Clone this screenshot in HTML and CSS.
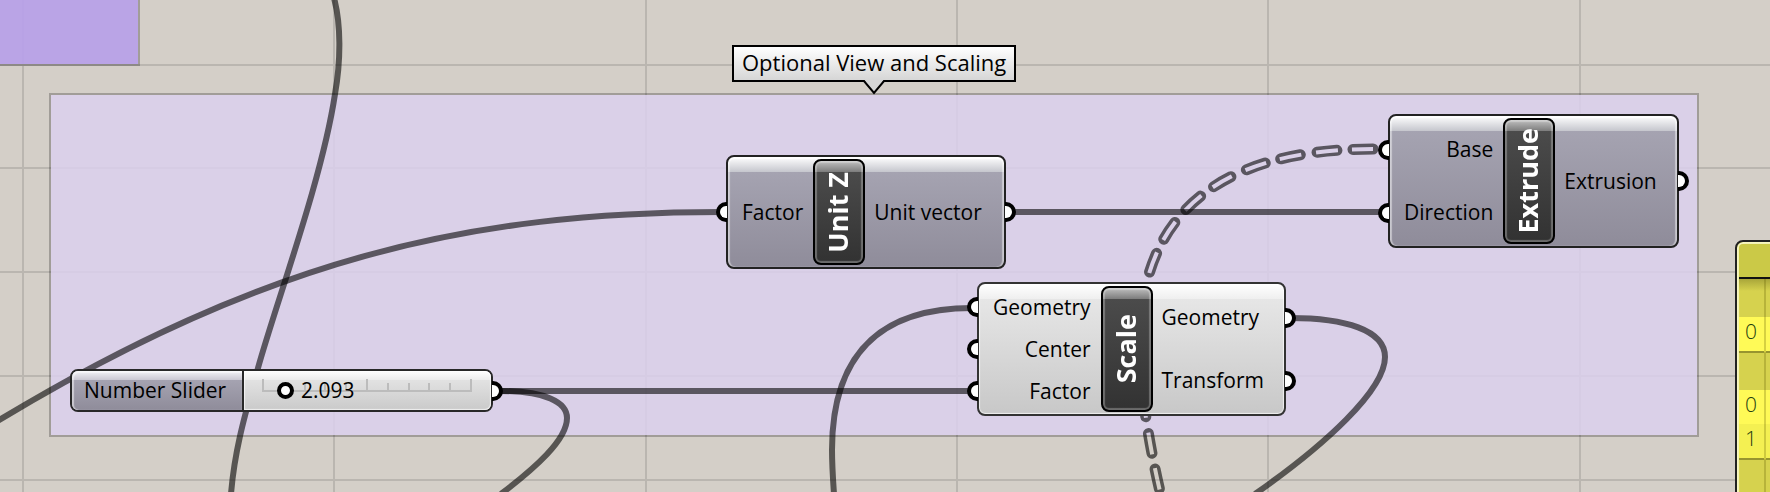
FILE: index.html
```html
<!DOCTYPE html>
<html lang="en">
<head>
<meta charset="utf-8">
<title>Optional View and Scaling</title>
<link rel="stylesheet" href="styles.css">
</head>
<body>
<main class="canvas">
  <svg class="grid" aria-hidden="true">
    <path d="M23 0V2000M334 0V2000M646 0V2000M957 0V2000M1268 0V2000M1580 0V2000M0 65H4000M0 168H4000M0 272H4000M0 376H4000M0 480H4000"/>
  </svg>
  <div class="group group-strong"></div>
  <section class="group group-soft" aria-labelledby="group-title"></section>

  <svg class="wires" aria-hidden="true">
    <defs>
      <mask id="dash-mask" maskUnits="userSpaceOnUse" x="1100" y="100" width="320" height="420">
        <path class="dash-outer" d="M1373 149C1240 149 1132 198 1140 360C1142 400 1150 450 1162 500"/>
        <path class="dash-inner" d="M1373 149C1240 149 1132 198 1140 360C1142 400 1150 450 1162 500"/>
      </mask>
    </defs>
    <path d="M334 -2C341 24 341 60 335 94C322 180 277 300 258 368C248 405 235 445 231 494"/>
    <path d="M722 212C470 212 265 259 -4 422"/>
    <path d="M500 391H972"/>
    <path d="M500 391C545 391 567 402 567 418C567 440 535 468 501 494"/>
    <path d="M972 308C890 308 832 345 832 450C832 465 833 480 834 494"/>
    <path d="M1010 212H1384"/>
    <path d="M1290 318C1345 318 1385 330 1385 357C1385 390 1325 445 1255 494"/>
    <rect class="dash-fill" x="1100" y="100" width="320" height="420" mask="url(#dash-mask)"/>
  </svg>

  <h1 class="callout" id="group-title">Optional View and Scaling
    <svg class="callout-tail" viewBox="0 0 24 15" aria-hidden="true"><path class="tail-fill" d="M2 0L12 12L22 0Z"/><path class="tail-line" d="M0 1H2L12 13L22 1H24"/></svg>
  </h1>

  <article class="node node-gray unit-z">
    <ul class="ports inputs"><li>Factor</li></ul>
    <h2 class="pill"><span>Unit Z</span></h2>
    <ul class="ports outputs"><li>Unit vector</li></ul>
  </article>

  <article class="node node-light scale">
    <ul class="ports inputs"><li>Geometry</li><li>Center</li><li>Factor</li></ul>
    <h2 class="pill"><span>Scale</span></h2>
    <ul class="ports outputs"><li>Geometry</li><li>Transform</li></ul>
  </article>

  <article class="node node-gray extrude">
    <ul class="ports inputs"><li>Base</li><li>Direction</li></ul>
    <h2 class="pill"><span>Extrude</span></h2>
    <ul class="ports outputs"><li>Extrusion</li></ul>
  </article>

  <div class="slider">
    <label class="slider-name" for="number">Number Slider</label>
    <div class="slider-body">
      <svg class="ticks" viewBox="0 0 210 14" aria-hidden="true"><path d="M1 0V12H209V0M105 0V12M22 4V12M43 4V12M63 4V12M84 4V12M126 4V12M147 4V12M167 4V12M188 4V12"/></svg>
      <input id="number" type="range" min="0" max="20" step="0.001" value="2.093">
      <output class="value" for="number">2.093</output>
    </div>
  </div>

  <div class="panel">
    <div class="panel-head"></div>
    <table class="panel-rows">
      <tbody>
        <tr class="path-row"><td></td><td></td></tr>
        <tr class="item-row last"><td>0</td><td></td></tr>
        <tr class="path-row"><td></td><td></td></tr>
        <tr class="item-row"><td>0</td><td></td></tr>
        <tr class="item-row alt last"><td>1</td><td></td></tr>
        <tr class="path-row"><td></td><td></td></tr>
      </tbody>
    </table>
  </div>
</main>
</body>
</html>
```
FILE: styles.css
```css
*, *::before, *::after { box-sizing: border-box; }

body {
  margin: 0;
  font-family: "Open Sans", "Noto Sans", sans-serif;
  font-size: 21px;
  font-weight: 400;
  line-height: 28px;
  color: #000;
}

h1, h2, ul { margin: 0; padding: 0; font: inherit; list-style: none; }

.canvas {
  position: relative;
  height: 100vh;
  overflow: hidden;
  background: #d4cfc8;
}

.grid, .wires {
  position: absolute;
  inset: 0;
  width: 100%;
  height: 100%;
  fill: none;
}

.grid { stroke: #bab6b0; stroke-width: 2; }
.wires { stroke: rgba(0, 0, 0, 0.59); stroke-width: 6; }
.dash-outer { stroke: #fff; stroke-width: 11; stroke-linecap: round; stroke-dasharray: 20 16 20 17; }
.dash-inner { stroke: #000; stroke-width: 4; stroke-dasharray: 22 14 22 15; stroke-dashoffset: 1; }
.dash-fill { fill: rgba(0, 0, 0, 0.59); stroke: none; }

.group { position: absolute; border: 2px solid rgba(0, 0, 0, 0.24); background-clip: padding-box; }

.group-strong {
  left: -2px;
  top: -2px;
  width: 142px;
  height: 68px;
  background-color: rgba(184, 160, 232, 0.93);
}

.group-soft {
  left: 49px;
  top: 93px;
  width: 1650px;
  height: 344px;
  background-color: rgba(219, 208, 238, 0.84);
}

.callout {
  position: absolute;
  left: 732px;
  top: 45px;
  padding: 1px 8px 4px;
  border: 2px solid #000;
  background: linear-gradient(#fff, #d6d6d6);
  font-size: 22px;
  white-space: nowrap;
}

.callout-tail {
  position: absolute;
  top: 100%;
  left: 50%;
  width: 24px;
  height: 15px;
  margin-left: -12px;
}
.tail-fill { fill: #d6d6d6; }
.tail-line { fill: none; stroke: #000; stroke-width: 2; }

.node {
  position: absolute;
  display: flex;
  padding: 2px;
  border: 2px solid #222;
  border-radius: 8px;
}

.node-gray {
  background: linear-gradient(#fff, #c5c6cd 15px, #a5a3b1 15px, #8f8c9a);
  box-shadow: inset 0 2px 1px #fff, inset 2px 0 1px rgba(255, 255, 255, 0.45), inset -2px 0 1px rgba(255, 255, 255, 0.45);
}
.node-light {
  background: linear-gradient(#fff, #efefef 15px, #e6e6e6 15px, #c8c8c8);
  border-color: #333;
  box-shadow: inset 0 0 1px 1px rgba(255, 255, 255, 0.7);
}

.unit-z { left: 726px; top: 155px; width: 280px; height: 114px; }
.scale { left: 977px; top: 282px; width: 309px; height: 134px; }
.extrude { left: 1388px; top: 114px; width: 291px; height: 134px; }

.ports { display: flex; flex-direction: column; }
.outputs { flex: auto; }
.ports li { position: relative; display: flex; flex: 1; align-items: center; white-space: nowrap; }
.inputs li { justify-content: flex-end; padding: 0 10px 1px 12px; }
.outputs li { padding: 0 0 1px 9px; }

.ports li::before, .slider::after {
  content: "";
  position: absolute;
  top: 50%;
  width: 11px;
  height: 20px;
  margin-top: -10px;
  border: 4px solid #000;
  background: #fff;
}
.inputs li::before { left: -14px; border-right: 0; border-radius: 10px 0 0 10px; }
.outputs li::before { right: -14px; }
.outputs li::before, .slider::after { border-left: 0; border-radius: 0 10px 10px 0; }

.pill {
  display: flex;
  flex: none;
  align-items: center;
  justify-content: center;
  width: 52px;
  padding-right: 2px;
  border: 2px solid #000;
  border-radius: 8px;
  background: linear-gradient(#c0c0c0, #7c7c7c 11px, #4b4b4b 11px, #323232);
  box-shadow: inset 0 0 1px 2px rgba(255, 255, 255, 0.28);
  color: #fff;
  font-size: 27px;
  font-weight: 700;
}
.pill span { writing-mode: vertical-rl; transform: rotate(180deg); white-space: nowrap; }

.slider {
  position: absolute;
  left: 70px;
  top: 369px;
  display: flex;
  width: 423px;
  height: 43px;
  border: 2px solid #282828;
  border-radius: 8px;
}
.slider::after { right: -12px; }

.slider-name {
  display: flex;
  align-items: center;
  padding: 0 0 1px 12px;
  width: 172px;
  border-right: 2px solid #282828;
  border-radius: 6px 0 0 6px;
  background: linear-gradient(#f2f2f6, #cac7d2 9px, #a5a3b1 9px, #8f8c9a);
  box-shadow: inset 1px 1px 1px 1px rgba(255, 255, 255, 0.5);
}

.slider-body {
  position: relative;
  flex: 1;
  border-radius: 0 6px 6px 0;
  background: linear-gradient(#fff, #ececec 9px, #e2e2e2 9px, #cacaca);
  box-shadow: inset 0 0 1px 1px rgba(255, 255, 255, 0.7);
}

.ticks {
  position: absolute;
  left: 18px;
  top: 8px;
  width: 210px;
  height: 14px;
  fill: none;
  stroke: #bcbcbc;
  stroke-width: 2;
}

.slider input {
  position: absolute;
  left: 11px;
  top: 11px;
  width: 224px;
  height: 17px;
  margin: 0;
  appearance: none;
  background: none;
}
.slider input::-webkit-slider-thumb {
  appearance: none;
  width: 17px;
  height: 17px;
  border: 4px solid #000;
  border-radius: 50%;
  background: #fff;
}

.value { position: absolute; left: 57px; top: 5px; }

.panel {
  position: absolute;
  left: 1735px;
  right: -200px;
  top: 240px;
  bottom: -20px;
  border: 2px solid #222;
  border-radius: 8px;
  background: #d6d24e;
  box-shadow: inset 2px 2px 1px #f7f6c0;
  padding: 2px 2px 0;
}
.panel-head { height: 35px; border-bottom: 2px solid #111; background: #cbc947; border-radius: 4px 0 0; }

.panel-rows {
  width: 100%;
  border-collapse: collapse;
  color: #24400f;
  font-weight: 300;
  background: linear-gradient(#a9a63a, transparent 12px);
}
.panel-rows td { height: 33px; padding: 0 6px 6px; }
.panel-rows td:first-child { width: 26px; border-right: 2px solid rgba(90, 88, 0, 0.25); }
.panel-rows .path-row td { height: 38px; padding: 0; }
.item-row { background: #fffa57; }
.alt { background: #f4f052; }
.last { border-bottom: 2px solid #97942f; }
```
